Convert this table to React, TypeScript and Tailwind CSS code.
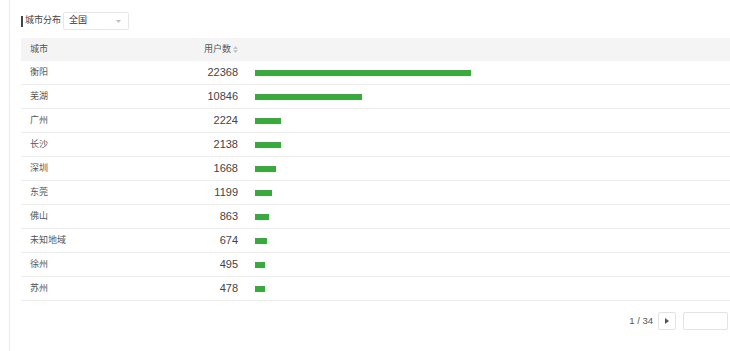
import React from "react";

const rows = [
  { city: "衡阳", count: 22368, bar: 216 },
  { city: "芜湖", count: 10846, bar: 107 },
  { city: "广州", count: 2224, bar: 26 },
  { city: "长沙", count: 2138, bar: 26 },
  { city: "深圳", count: 1668, bar: 21 },
  { city: "东莞", count: 1199, bar: 17 },
  { city: "佛山", count: 863, bar: 14 },
  { city: "未知地域", count: 674, bar: 12 },
  { city: "徐州", count: 495, bar: 10 },
  { city: "苏州", count: 478, bar: 10 },
];

const font = { fontFamily: '"Liberation Sans", "Noto Sans CJK SC", sans-serif' };

export default function App() {
  return (
    <div className="w-[730px] h-[351px] bg-white overflow-hidden text-[#555]" style={font}>
      <div className="ml-[9px] h-full border-l border-[#ececec] pl-[11px] pt-[12px]">
        <div className="flex items-center h-[18px]">
          <div className="w-[2px] h-[11px] bg-[#444]" />
          <span className="ml-[2px] text-[9px] text-[#444]">城市分布</span>
          <div className="ml-[2px] w-[66px] h-[18px] border border-[#e6e6e6] rounded-[2px] flex items-center justify-between pl-[5px] pr-[7px]">
            <span className="text-[9px] text-[#333]">全国</span>
            <svg width="5" height="3" viewBox="0 0 5 3">
              <path d="M0 0 L5 0 L2.5 3 Z" fill="#c0c0c0" />
            </svg>
          </div>
        </div>

        <div className="mt-[8px]">
          <div className="flex items-center h-[23px] bg-[#f4f4f4] text-[9px] text-[#555]">
            <div className="w-[100px] pl-[9px]">城市</div>
            <div className="w-[117px] flex justify-end items-center gap-[2px]">
              <span>用户数</span>
              <svg width="5" height="7" viewBox="0 0 5 7">
                <path d="M0 3 L5 3 L2.5 0 Z" fill="#c4c4c4" />
                <path d="M0 4 L5 4 L2.5 7 Z" fill="#c4c4c4" />
              </svg>
            </div>
          </div>
          {rows.map((r) => (
            <div key={r.city} className="flex items-center h-[24px] border-b border-[#ebebeb]">
              <div className="w-[100px] pl-[9px] text-[9px] text-[#555]">{r.city}</div>
              <div className="w-[117px] text-right text-[11px] text-[#444]">{r.count}</div>
              <div className="ml-[17px] h-[6px] bg-[#3aaa3f]" style={{ width: r.bar }} />
            </div>
          ))}
        </div>

        <div className="flex items-center justify-end mt-[11px] pr-[2px]">
          <span className="text-[9.5px] text-[#555]">1 / 34</span>
          <div className="ml-[5px] w-[18px] h-[18px] border border-[#e3e3e3] rounded-[2px] flex items-center justify-center">
            <svg width="4" height="6" viewBox="0 0 4 6">
              <path d="M0 0 L4 3 L0 6 Z" fill="#555" />
            </svg>
          </div>
          <div className="ml-[7px] w-[45px] h-[18px] border border-[#e3e3e3] rounded-[2px]" />
        </div>
      </div>
    </div>
  );
}
